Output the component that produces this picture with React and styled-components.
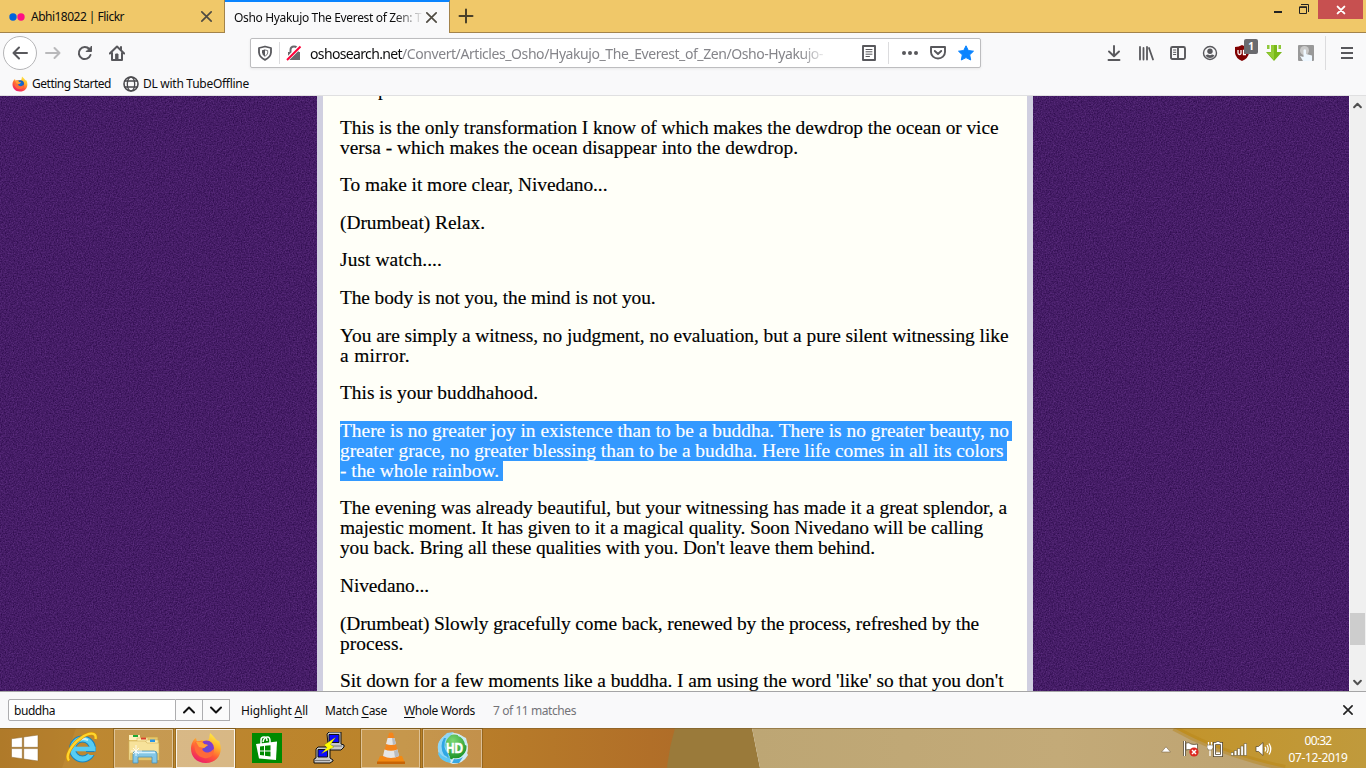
import React, { useLayoutEffect, useRef, useState } from "react";
import styled, { createGlobalStyle, css } from "styled-components";

const UI = `"Noto Sans", "Open Sans", sans-serif`;

const noise = `url("data:image/svg+xml,${encodeURIComponent(
  `<svg xmlns='http://www.w3.org/2000/svg' width='256' height='256'><filter id='n' x='0' y='0' width='100%' height='100%' color-interpolation-filters='sRGB'><feTurbulence type='fractalNoise' baseFrequency='0.75' numOctaves='2' stitchTiles='stitch'/><feColorMatrix values='0.26 0 0 0 0.142  0.19 0 0 0 0.018  0.28 0 0 0 0.262  0 0 0 0 1'/></filter><rect width='256' height='256' filter='url(#n)'/></svg>`
)}")`;

const GlobalStyle = createGlobalStyle`
  * { box-sizing: border-box; }
  body { margin: 0; overflow: hidden; background: #f9f9fa; }
  svg { display: block; flex: none; }
`;

/* Text whose tracking is adjusted so that the run takes the given width. */
const Run = styled.span`
  display: inline-block;
  white-space: pre;
`;
function Fit({ w, children }) {
  const ref = useRef(null);
  const [spacing, setSpacing] = useState(0);
  useLayoutEffect(() => {
    const el = ref.current;
    const n = el.textContent.length;
    setSpacing((w - el.getBoundingClientRect().width) / n);
  }, [w]);
  return (
    <Run ref={ref} style={{ letterSpacing: `${spacing}px` }}>
      {children}
    </Run>
  );
}

const Screen = styled.div`
  width: 1366px;
  height: 768px;
  display: flex;
  flex-direction: column;
  overflow: hidden;
  font: 12px ${UI};
  color: #0c0c0d;
`;

/* ---------- tab strip ---------- */
const TabStrip = styled.div`
  height: 33px;
  flex: none;
  display: flex;
  background: #f0c869;
`;
const Tab = styled.div`
  width: 225px;
  height: 33px;
  display: flex;
  align-items: center;
  padding: 1px 10px 0 9px;
  border-right: 1px solid #a3834a;
  border-bottom: 1px solid #a3834a;
  ${(p) =>
    p.$active &&
    css`
      background: #f9f9fa;
      border-top: 2px solid #0a84ff;
      border-bottom: 0;
      padding-top: 0;
    `}
`;
const TabTitle = styled.div`
  flex: 1;
  overflow: hidden;
  white-space: nowrap;
  line-height: 18px;
  padding-left: ${(p) => p.$pad || 0}px;
  ${(p) =>
    p.$fade &&
    css`
      padding-top: 1px;
      mask-image: linear-gradient(90deg, #000 160px, transparent 190px);
    `}
`;
const StripRest = styled.div`
  flex: 1;
  display: flex;
  align-items: flex-start;
  border-bottom: 1px solid #a3834a;
  padding-left: 8px;
`;
const PlusBox = styled.div`
  padding-top: 8px;
  flex: 1;
`;
const WinGlyphs = styled.div`
  display: flex;
  gap: 17px;
  padding: 4px 9px 0 0;
`;
const CloseWin = styled.div`
  width: 45px;
  height: 19px;
  margin-right: 3px;
  background: #c75050;
  display: flex;
  align-items: center;
  justify-content: center;
`;

/* ---------- toolbars ---------- */
const NavBar = styled.div`
  height: 40px;
  flex: none;
  display: flex;
  align-items: center;
  background: #f9f9fa;
  padding: 0 13px 0 3px;
`;
const BackButton = styled.div`
  width: 34px;
  height: 34px;
  border: 1px solid #b5b5b7;
  border-radius: 50%;
  background: #fff;
  display: flex;
  align-items: center;
  justify-content: center;
`;
const NavIcons = styled.div`
  display: flex;
  gap: 16px;
  padding-left: 8px;
  width: 213px;
`;
const UrlBar = styled.div`
  width: 731px;
  height: 30px;
  background: #fff;
  border: 1px solid #bdbdbf;
  border-radius: 2px;
  box-shadow: 0 1px 3px rgba(0, 0, 0, 0.07);
  display: flex;
  align-items: center;
  padding: 0 6px 0 6px;
`;
const Divider = styled.div`
  width: 1px;
  height: ${(p) => p.$h || 22}px;
  background: #dcdcde;
  margin: 0 ${(p) => p.$r ?? 6}px 0 ${(p) => p.$l ?? 6}px;
`;
const UrlText = styled.div`
  width: 520px;
  margin: 0 31px 0 8px;
  font-size: 14px;
  line-height: 20px;
  padding-top: 1px;
  white-space: nowrap;
  overflow: hidden;
  color: #85858a;
  mask-image: linear-gradient(90deg, #000 490px, transparent 518px);
`;
const Host = styled.span`
  color: #0c0c0d;
`;
const UrlActions = styled.div`
  display: flex;
  gap: 12px;
`;
const Extensions = styled.div`
  flex: 1;
  display: flex;
  align-items: center;
  justify-content: flex-end;
  gap: 16px;
`;
const BadgeHost = styled.div`
  position: relative;
`;
const Badge = styled.div`
  position: absolute;
  left: 10px;
  top: -6px;
  width: 14px;
  height: 15px;
  border-radius: 2px;
  background: #6a6a6e;
  color: #fff;
  font: bold 10px/15px ${UI};
  text-align: center;
`;
const Bookmarks = styled.div`
  height: 23px;
  flex: none;
  display: flex;
  padding: 2px 12px 0;
  background: #f9f9fa;
  border-bottom: 1px solid #e0e0e1;
`;
const Bookmark = styled.div`
  display: flex;
  align-items: center;
  gap: 4px;
  height: 17px;
  margin-right: 12px;
  line-height: 17px;
`;

/* ---------- page ---------- */
const Viewport = styled.div`
  height: 595px;
  flex: none;
  display: flex;
  overflow: hidden;
  background: #421961 ${noise};
`;
const Article = styled.main`
  width: 716px;
  margin-left: 317px;
  border: solid #d0cfe0;
  border-width: 0 6px;
  padding: 0 17px;
  background: #fffff8;
  color: #000;
  font: 19.4px/20px "Liberation Serif", serif;
  -webkit-text-stroke: 0.15px currentColor;
`;
const Cut = styled.p`
  margin: -15.94px 0 17.6px;
  padding-left: 38px;
`;
const Para = styled.p`
  margin: 0 0 17.6px;
`;
const Line = styled.span`
  display: block;
  height: 20px;
  white-space: pre;
`;
const Marked = styled(Line)`
  width: ${(p) => p.$w}px;
  background: #3399ff;
  color: #fff;
`;
const ScrollBar = styled.div`
  width: 17px;
  margin-left: auto;
  background: #f0f0f0;
  border-left: 1px solid #fbfbfb;
  display: flex;
  flex-direction: column;
  align-items: flex-start;
  padding: 5px 0 4px;
  svg { margin-left: 3px; }
`;
const Thumb = styled.div`
  width: 15px;
  height: 32px;
  background: #cdcdcd;
  margin: 503px 0 auto;
`;

/* ---------- find bar ---------- */
const FindBar = styled.div`
  height: 37px;
  flex: none;
  display: flex;
  align-items: center;
  border-top: 1px solid #a5a5a6;
  background: #f9f9fa;
  padding: 0 12px 0 8px;
`;
const FindField = styled.div`
  width: 168px;
  height: 22px;
  border: 1px solid #adadaf;
  border-radius: 2px 0 0 2px;
  background: #fff;
  padding: 1px 5px 0;
  line-height: 20px;
`;
const FindStep = styled.div`
  width: 27px;
  height: 22px;
  border: 1px solid #adadaf;
  border-left: 0;
  background: #fbfbfb;
  display: flex;
  align-items: center;
  justify-content: center;
`;
const FindLabel = styled.div`
  margin-left: ${(p) => p.$l}px;
  color: ${(p) => (p.$dim ? "#737378" : "#0c0c0d")};
  line-height: 18px;
  padding-top: 1px;
  u { text-underline-offset: 2px; }
`;
const Spacer = styled.div`
  flex: 1;
`;

/* ---------- task bar ---------- */
const TaskBar = styled.div`
  height: 40px;
  flex: none;
  position: relative;
  display: flex;
  align-items: center;
`;
const Backdrop = styled.svg`
  position: absolute;
  inset: 0;
`;
const TaskItem = styled.div`
  position: relative;
  width: ${(p) => p.$w ?? 59}px;
  height: 39px;
  margin-right: ${(p) => p.$r ?? 3}px;
  display: flex;
  align-items: center;
  justify-content: center;
  ${(p) =>
    p.$open &&
    css`
      background: rgba(255, 255, 255, ${p.$active ? 0.42 : 0.16});
      border: 1px solid rgba(255, 255, 255, ${p.$active ? 0.85 : 0.42});
      box-shadow: 0 0 0 1px rgba(90, 60, 10, 0.35);
    `}
`;
const Tray = styled.div`
  position: relative;
  margin-left: auto;
  display: flex;
  align-items: center;
  gap: 8px;
  padding-top: 2px;
`;
const TrayArrow = styled.svg`
  margin-right: 4px;
`;
const Clock = styled.div`
  width: 76px;
  margin-right: 10px;
  color: #fff;
  text-align: center;
  line-height: 17px;
`;

/* ---------- drawings ---------- */
const G = "#58585c";
const Cross = ({ s = 16, c = "#4f4b42", w = 1.8, r = 4.5 }) => (
  <svg width={s} height={s} viewBox="-8 -8 16 16">
    <path d={`M${-r} ${-r}L${r} ${r}M${r} ${-r}L${-r} ${r}`} stroke={c} strokeWidth={w} fill="none" strokeLinecap="round" />
  </svg>
);
const Stroke = ({ d, c = G, w = 2, s = 16, children }) => (
  <svg width={s} height={s} viewBox="0 0 16 16" fill="none" stroke={c} strokeWidth={w} strokeLinecap="round" strokeLinejoin="round">
    {d && <path d={d} />}
    {children}
  </svg>
);
const FoxIcon = ({ size, id }) => (
  <svg width={size} height={size} viewBox="0 0 32 32">
    <defs>
      <linearGradient id={`${id}a`} x1=".8" y1="0" x2=".3" y2="1">
        <stop offset="0" stopColor="#fff04a" />
        <stop offset=".35" stopColor="#ffb52b" />
        <stop offset=".65" stopColor="#ff5a36" />
        <stop offset="1" stopColor="#ec1c6c" />
      </linearGradient>
      <radialGradient id={`${id}b`}>
        <stop offset="0" stopColor={size > 20 ? "#5b4fd8" : "#0a7be0"} />
        <stop offset="1" stopColor={size > 20 ? "#8a3ac8" : "#1b57b8"} />
      </radialGradient>
    </defs>
    <path d="M20 1C25 5 26 9 29 9C34 20 28 31 16 31C6 31 1 24 1 17C1 12 3 8 6 6L7 10L12 8C15 9 17 9 19 7Z" fill={`url(#${id}a)`} />
    <circle cx="16.5" cy="16" r="7.5" fill={`url(#${id}b)`} />
    <path d="M5 10C9 8 13 9 14 12L18 13L14 16C11 16 12 20 17 20.500C21 20.500 22 18 24 17C24 24 19 27 14 26C7 25 3 18 5 10Z" fill="#ff6a39" />
    <path d="M6 10C9 9 13 10 14 12L18 13L14 16L9 15Z" fill="#ffa436" />
  </svg>
);
const WindowsLogo = () => (
  <svg width="28" height="26" viewBox="0 0 28 26" fill="#fff" stroke="#8a642a" strokeWidth=".5">
    <path d="M.5 3.8L11.3 2.3V12.3H.5ZM12.7 2L27 0V12.3H12.7ZM.5 13.6H11.3V23.7L.5 22.2ZM12.7 13.6H27V26L12.7 24Z" />
  </svg>
);
const IeLogo = () => (
  <svg width="32" height="32" viewBox="0 0 32 32" fill="none">
    <circle cx="16.5" cy="17" r="10" stroke="#1a83bd" strokeWidth="7" />
    <circle cx="16.5" cy="17" r="10" stroke="#55cdf5" strokeWidth="5" />
    <path d="M18 19.5H31V23H24Z" fill="#bd852f" />
    <path d="M9 17H29.5" stroke="#58cdf3" strokeWidth="4.6" />
    <path d="M28.5 19.6H20" stroke="#1a83bd" strokeWidth="1" />
    <path d="M10 10Q15 5 22 8" stroke="#c4f2ff" strokeWidth="2" />
    <path d="M3 29C-1 24 5 13 15 6C23 0 31 0 29.5 7" stroke="#d99400" strokeWidth="3.4" />
    <path d="M3 28.5C-1 24 5 13 15 6C23 0 31 0 29.5 7" stroke="#ffd52e" strokeWidth="2.3" />
  </svg>
);
const Folder = () => (
  <svg width="32" height="32" viewBox="0 0 32 32">
    <path d="M1 3H9L11 5H30V8H31V27H1Z" fill="#e6c86b" stroke="#c7a24a" strokeWidth=".7" />
    <path d="M1 3H12V8H1Z" fill="#fff2bd" />
    <path d="M9 6H20V10H9Z" fill="#fdeeb0" stroke="#cfae5b" strokeWidth=".5" />
    <path d="M18 8H30V12H18Z" fill="#fdeeb0" stroke="#cfae5b" strokeWidth=".5" />
    <path d="M1 9H17L19 11H31V28H1Z" fill="#f7e29a" stroke="#d3b25c" strokeWidth=".6" />
    <path d="M5 3H10V5H5Z" fill="#1caa35" />
    <path d="M13 5.5H18V7.5H13Z" fill="#d8402c" />
    <path d="M22 7.500H27V10H22Z" fill="#2b96e6" />
    <path d="M2 21H31V28H2Z" fill="#e3c46c" />
    <path d="M5 31V22Q5 19 8 19H26Q29 19 29 22V31H24V25H10V31Z" fill="#84c7e6" stroke="#4a93b8" strokeWidth=".8" />
    <path d="M7 20.5H27" stroke="#d7f3ff" strokeWidth="1.6" />
    <path d="M8 13V24M3 19H14M5 16L11 22M11 16L5 22" stroke="#fff" strokeWidth=".8" />
  </svg>
);
const Store = () => (
  <svg width="30" height="30" viewBox="0 0 30 30">
    <path d="M0 0H30V30H0Z" fill="#008a00" />
    <path d="M9 11V7Q9 4 12 4Q15 4 15 8M11 9Q12 4 15.5 4Q18 4 18 8V10" fill="none" stroke="#fff" strokeWidth="1.5" />
    <path d="M4 11L25 8.5L24 27L7 25.5Z" fill="#fff" />
    <path d="M8 13.500L12 13V17.5H8ZM13 12.800L18.500 12.200V17.5H13ZM8 18.500H12V22.500L8 22ZM13 18.500H18.500V23.500L13 22.700Z" fill="#008a00" />
  </svg>
);
const Putty = () => (
  <svg width="32" height="32" viewBox="0 0 32 32" stroke="#111" strokeWidth="1" strokeLinejoin="round">
    <path d="M14 2L16 0H28V12L31 13V15L28 18H13V14L15 12Z" fill="#c9c9c9" />
    <path d="M16 2.500H26V10.500H16Z" fill="#0a0aff" />
    <path d="M14 14H29" stroke="#777" />
    <path d="M3 17L5 15H17V26L20 28V29L17 31H1V27L3 26Z" fill="#c9c9c9" />
    <path d="M5 17.500H14.500V25H5Z" fill="#0a0aff" />
    <path d="M2 28.500H17" stroke="#777" />
    <path d="M23 5L11 13L14 15.500L8 22L21 15L17.500 12.500Z" fill="#ffff00" strokeWidth=".2" />
  </svg>
);
const Cone = () => (
  <svg width="28" height="32" viewBox="0 0 28 32">
    <path d="M3 24H25L28 31H0Z" fill="#f28a12" />
    <path d="M0 29.500H28V32H0Z" fill="#c86404" />
    <path d="M12 1Q14 0 16 1L22.500 26Q14 31 5.500 26Z" fill="#f4851c" />
    <path d="M10.600 6H17.400L19 12Q14 14 9 12ZM7.500 17.500Q14 20 20.500 17.500L22 24Q14 28 6 24Z" fill="#e6e6e6" />
    <path d="M15 6H17.400L19 12L16 13ZM17 19L20.500 17.500L22 24L18 25.500Z" fill="#b9bcc0" />
  </svg>
);
const HdIcon = () => (
  <svg width="32" height="32" viewBox="0 0 32 32">
    <defs>
      <radialGradient id="hd" cx=".45" cy=".25" r=".8">
        <stop offset="0" stopColor="#7bd872" />
        <stop offset="1" stopColor="#148d22" />
      </radialGradient>
    </defs>
    <circle cx="16" cy="16" r="15" fill="#dcebf0" />
    <circle cx="17" cy="15" r="12.500" fill="url(#hd)" />
    <text x="9" y="21" fontFamily="Liberation Sans, sans-serif" fontWeight="bold" fontSize="14" fill="#fff" stroke="#fff" strokeWidth=".5" textLength="17" lengthAdjust="spacingAndGlyphs">HD</text>
    <path d="M10 1L17 0L13 4Q6 10 10 19L13 25L4 25Q-3 13 5 6Z" fill="#8fd6f6" />
    <path d="M7 6Q2 14 7 23L12 26L11 22Q5 15 9 6Z" fill="#2fa6e4" />
    <path d="M2 20Q6 27 13 25L14 31Q4 30 1 22Z" fill="#5fc6f2" />
    <path d="M13 31L16 26Q24 28 29 19L31 23Q26 32 16 32Z" fill="#cfeaf5" />
    <path d="M15 31L17 27Q22 28 26 25L22 31Z" fill="#3aa8e2" />
    <path d="M21 2L29 6L31 14L28 13Q27 6 21 4Z" fill="#c9ebf5" />
  </svg>
);
const Globe = () => (
  <svg width="16" height="16" viewBox="0 0 16 16" fill="none" stroke="#4a4a4e" strokeWidth="1.300">
    <circle cx="8" cy="8" r="7" strokeWidth="1.600" />
    <ellipse cx="8" cy="8" rx="3.700" ry="7" />
    <path d="M1.500 5H14.500M1.500 11H14.500" />
  </svg>
);

/* [text, width of the run, width of its selection] */
const paragraphs = [
  [["This is the only transformation I know of which makes the dewdrop the ocean or vice", 658.5], ["versa - which makes the ocean disappear into the dewdrop.", 458]],
  [["To make it more clear, Nivedano...", 267.5]],
  [["(Drumbeat) Relax.", 145]],
  [["Just watch....", 102]],
  [["The body is not you, the mind is not you.", 315.5]],
  [["You are simply a witness, no judgment, no evaluation, but a pure silent witnessing like", 668.5], ["a mirror.", 70]],
  [["This is your buddhahood.", 198]],
  [["There is no greater joy in existence than to be a buddha. There is no greater beauty, no", 669, 672], ["greater grace, no greater blessing than to be a buddha. Here life comes in all its colors", 663.5, 667], ["- the whole rainbow.", 159, 163]],
  [["The evening was already beautiful, but your witnessing has made it a great splendor, a", 667], ["majestic moment. It has given to it a magical quality. Soon Nivedano will be calling", 643], ["you back. Bring all these qualities with you. Don't leave them behind.", 535]],
  [["Nivedano...", 89]],
  [["(Drumbeat) Slowly gracefully come back, renewed by the process, refreshed by the", 639], ["process.", 63.5]],
  [["Sit down for a few moments like a buddha. I am using the word 'like' so that you don't", 663.5]],
];

export default function App() {
  return (
    <Screen>
      <GlobalStyle />
      <TabStrip>
        <Tab>
          <svg width="16" height="16" viewBox="0 0 16 16">
            <circle cx="4" cy="8" r="3.700" fill="#0063dc" />
            <circle cx="12" cy="8" r="3.700" fill="#ff0f84" />
          </svg>
          <TabTitle $pad={6}><Fit w={93}>Abhi18022 | Flickr</Fit></TabTitle>
          <Cross s={15} r={5} />
        </Tab>
        <Tab $active>
          <TabTitle $fade><Fit w={181}>Osho Hyakujo The Everest of Zen: </Fit>T</TabTitle>
          <Cross s={15} r={5} />
        </Tab>
        <StripRest>
          <PlusBox><Stroke d="M8 1.500V14.500M1.500 8H14.500" c="#4a4029" s={16} /></PlusBox>
          <WinGlyphs>
            <svg width="8" height="11"><path d="M0 7H8V9H0Z" fill="#222" /></svg>
            <svg width="10" height="10" fill="none" stroke="#222"><path d="M2 .5H9.500V8" /><path d="M.5 3H7.500V9.500H.5Z" /><path d="M.5 3.200H8" strokeWidth="1.500" /></svg>
          </WinGlyphs>
          <CloseWin><Cross s={12} c="#fff" w={2.6} r={4.5} /></CloseWin>
        </StripRest>
      </TabStrip>

      <NavBar>
        <BackButton><Stroke d="M15 8H1.500M7 2.500L1.500 8L7 13.500" /></BackButton>
        <NavIcons>
          <Stroke d="M1 8H14.500M9.500 3L14.500 8L9.500 13" c="#b9b9bb" />
          <Stroke>
            <path d="M13.500 10A6 6 0 1 1 12.300 4" />
            <path d="M14.500 1.500V6.500H9.500Z" fill={G} strokeWidth="1" />
          </Stroke>
          <Stroke>
            <path d="M.8 8.500L8 1.500L15.200 8.500M3 8V15H13V8" />
            <path d="M7 9H9V15H7Z" fill={G} strokeWidth="1" />
            <path d="M12 2V4.500" />
          </Stroke>
        </NavIcons>
        <UrlBar>
          <Stroke w={1.8}>
            <path d="M8 1.500L14 3V7.500Q13.500 12.500 8 14.800Q2.500 12.500 2 7.500V3Z" />
            <path d="M8 4.500V11.500Q5 10 5 7.500V5.200Z" fill={G} stroke="none" />
            <path d="M8 5L10.700 5.600V8Q10.500 10 8 11.300" strokeWidth=".8" />
          </Stroke>
          <Divider />
          <svg width="16" height="16" viewBox="0 0 16 16">
            <path d="M4.500 8V5Q4.500 1.500 8 1.500Q11.500 1.500 11.500 5V8" fill="none" stroke="#68686c" strokeWidth="2" />
            <path d="M2 7H14V15H2Z" fill="#68686c" />
            <path d="M.5 15L14.500 1" stroke="#fff" strokeWidth="4" />
            <path d="M1 15L14.500 1.500" stroke="#ff0039" strokeWidth="1.900" />
          </svg>
          <UrlText>
            <Host><Fit w={92}>oshosearch.net</Fit></Host>
            <Fit w={421}>/Convert/Articles_Osho/Hyakujo_The_Everest_of_Zen/Osho-Hyakujo-</Fit>
          </UrlText>
          <Stroke w={1.9}>
            <path d="M2 1H14V15H2Z" />
            <path d="M5 4.500H11M5 6.800H11M5 9.200H11M5 11.500H8.500" strokeWidth="1" />
          </Stroke>
          <Divider $h={22} $l={11} $r={13} />
          <UrlActions>
            <svg width="16" height="16" viewBox="0 0 16 16" fill={G}><circle cx="2" cy="8" r="2" /><circle cx="8" cy="8" r="2" /><circle cx="14" cy="8" r="2" /></svg>
            <Stroke w={1.900}><path d="M1 2H15V7A7 6.500 0 0 1 1 7Z" /><path d="M4.800 6L8 9L11.200 6" /></Stroke>
            <svg width="16" height="16" viewBox="0 0 16 16"><path d="M8 .8L10.300 5.500L15.500 6.200L11.700 9.800L12.700 15L8 12.600L3.300 15L4.300 9.800L.5 6.200L5.700 5.500Z" fill="#0a84ff" stroke="#0a84ff" strokeLinejoin="round" /></svg>
          </UrlActions>
        </UrlBar>
        <Extensions>
          <Stroke d="M8 1V11M3 6.500L8 11.200L13 6.500M2.500 15H13.500" w={1.900} />
          <Stroke d="M2 2V14.500M5.500 3V14.500M9 2V14.500M11 3L15 14.500" w={1.8} />
          <Stroke w={1.900}><path d="M2.500 2H13.500Q15 2 15 3.500V12.500Q15 14 13.500 14H2.500Q1 14 1 12.500V3.500Q1 2 2.500 2ZM8 2V14" /><path d="M3.500 5H5.800M3.500 7.300H5.800M3.500 9.500H5.800" strokeWidth="1" /></Stroke>
          <Stroke w={1.4}>
            <circle cx="8" cy="8" r="6.500" />
            <circle cx="8" cy="6.300" r="2.700" fill={G} stroke="none" />
            <path d="M3.500 10.500Q5 9.500 6 9.500Q8 11 10 9.500Q11 9.500 12.500 10.500Q11 13 8 13Q5 13 3.500 10.500Z" fill={G} stroke="none" />
          </Stroke>
          <BadgeHost>
            <svg width="16" height="16" viewBox="0 0 16 16">
              <path d="M8 0Q11 2 15 2V8Q14.500 13 8 16Q1.500 13 1 8V2Q5 2 8 0Z" fill="#800000" />
              <path d="M4 5V8Q4 9.500 5.500 9.500Q7 9.500 7 8V5M12 5.500H9.500V9.500H12" stroke="#fff" strokeWidth="1.300" fill="none" />
            </svg>
            <Badge>1</Badge>
          </BadgeHost>
          <svg width="16" height="16" viewBox="0 0 16 16"><path d="M5 0H11V7H16L8 16L0 7H5Z" fill="#78b818" /><path d="M1 0H3.500V4H1ZM12.500 0H15V4H12.500Z" fill="#8fc83a" /><path d="M5 0H8V15L1 7.500H5Z" fill="#93cc35" /></svg>
          <svg width="16" height="16" viewBox="0 0 16 16"><rect width="16" height="16" rx="1" fill="#999" /><circle cx="6.500" cy="5.500" r="4.500" fill="#c9c9c9" /><path d="M5.500 5Q7 3.500 8 5V9L14 10.500V16H5L2 11L5.500 12Z" fill="#eef7ff" /></svg>
          <Divider $h={34} $l={-5} $r={-1} />
          <svg width="12" height="14" viewBox="0 0 12 14"><path d="M0 2H12M0 7H12M0 12H12" stroke={G} strokeWidth="2" /></svg>
        </Extensions>
      </NavBar>

      <Bookmarks>
        <Bookmark><FoxIcon size={16} id="s" /><Fit w={79}>Getting Started</Fit></Bookmark>
        <Bookmark><Globe /><Fit w={106}>DL with TubeOffline</Fit></Bookmark>
      </Bookmarks>

      <Viewport>
        <Article>
          <Cut>p</Cut>
          {paragraphs.map((lines, i) => (
            <Para key={i}>
              {lines.map(([text, w, mark]) =>
                mark ? (
                  <Marked key={text} $w={mark}><Fit w={w}>{text}</Fit></Marked>
                ) : (
                  <Line key={text}><Fit w={w}>{text}</Fit></Line>
                )
              )}
            </Para>
          ))}
        </Article>
        <ScrollBar>
          <Stroke s={9} d="M2 11L8 5L14 11" c="#505050" w={3.5} />
          <Thumb />
          <Stroke s={9} d="M2 5L8 11L14 5" c="#505050" w={3.5} />
        </ScrollBar>
      </Viewport>

      <FindBar>
        <FindField><Fit w={41}>buddha</Fit></FindField>
        <FindStep><Stroke d="M3 10.500L8 5.500L13 10.500" c="#111" /></FindStep>
        <FindStep><Stroke d="M3 5.500L8 10.500L13 5.500" c="#111" /></FindStep>
        <FindLabel $l={11}><Fit w={67}>Highlight <u>A</u>ll</Fit></FindLabel>
        <FindLabel $l={17}><Fit w={62}>Match <u>C</u>ase</Fit></FindLabel>
        <FindLabel $l={17}><Fit w={71}><u>W</u>hole Words</Fit></FindLabel>
        <FindLabel $l={18} $dim><Fit w={83}>7 of 11 matches</Fit></FindLabel>
        <Spacer />
        <Cross s={12} c="#222" w={2.2} r={5.5} />
      </FindBar>

      <TaskBar>
        <Backdrop width="1366" height="40" viewBox="0 0 1366 40">
          <defs>
            <linearGradient id="w1"><stop offset="0" stopColor="#b37e2c" /><stop offset=".1" stopColor="#bd8832" /><stop offset=".6" stopColor="#bb832a" /><stop offset="1" stopColor="#b06d28" /></linearGradient>
            <linearGradient id="w2"><stop offset="0" stopColor="#bda674" /><stop offset=".5" stopColor="#c3aa78" /><stop offset="1" stopColor="#bba06e" /></linearGradient>
            <linearGradient id="w3"><stop offset="0" stopColor="#c3942b" /><stop offset="1" stopColor="#c09a3c" /></linearGradient>
          </defs>
          <path d="M0 0H675V40H0Z" fill="url(#w1)" />
          <path d="M0 0H76L62 40H0Z" fill="#a97425" opacity=".35" />
          <path d="M675 0H752L760 40H667Q669 20 675 0Z" fill="#9a7a3a" />
          <path d="M752 0H1366V40H760Z" fill="url(#w2)" />
          <path d="M1174 0H1366V40H1285Q1220 26 1174 0Z" fill="url(#w3)" />
          <path d="M1174 0Q1220 26 1285 40" stroke="#b98416" strokeWidth="6" opacity=".45" fill="none" />
          <path d="M0 .5H1366" stroke="#7a5c28" opacity=".55" />
        </Backdrop>
        <TaskItem $w={50} $r={3}><WindowsLogo /></TaskItem>
        <TaskItem $w={58} $r={3}><IeLogo /></TaskItem>
        <TaskItem $open><Folder /></TaskItem>
        <TaskItem $open $active><FoxIcon size={32} id="l" /></TaskItem>
        <TaskItem $w={58}><Store /></TaskItem>
        <TaskItem><Putty /></TaskItem>
        <TaskItem $open><Cone /></TaskItem>
        <TaskItem $open><HdIcon /></TaskItem>
        <Tray>
          <TrayArrow width="10" height="7"><path d="M.5 6L5 .8L9.500 6Z" fill="#fff" stroke="#786446" strokeWidth=".6" /></TrayArrow>
          <svg width="16" height="16" viewBox="0 0 16 16"><path d="M1.500 0V15" stroke="#4e4026" strokeWidth="3" /><path d="M1.500 0V15" stroke="#fff" strokeWidth="1.400" /><path d="M3 2Q6 1 8 3Q11 4 14.500 3V10Q11 11 8 9Q6 8 3 9Z" fill="#fff" stroke="#4e4026" strokeWidth=".7" /><circle cx="11" cy="11" r="4.600" fill="#dc2a20" /><path d="M9 9L13 13M13 9L9 13" stroke="#fff" strokeWidth="1.500" /></svg>
          <svg width="16" height="16" viewBox="0 0 16 16" fill="none" stroke="#fff"><path d="M7.500 2.500H14.500V14.500H7.500ZM9.500 1.500H12.500" strokeWidth="3" stroke="#4e4026" /><path d="M7.500 2.500H14.500V14.500H7.500ZM9.500 1.500H12.500" strokeWidth="1.400" /><path d="M9 11.500H13V13H9Z" fill="#fff" stroke="none" /><path d="M1.500 1V4M4.500 1V4M3 8V15" strokeWidth="1.300" /><path d="M0 4H6V7L4.500 9H1.500L0 7Z" fill="#fff" stroke="#4e4026" strokeWidth=".5" /></svg>
          <svg width="16" height="16" viewBox="0 0 16 16" fill="#fff" stroke="#4e4026" strokeWidth=".5"><path d="M0 11.500H2.500V14.500H0ZM3.200 9.500H5.800V14.500H3.200ZM6.500 7.500H9.100V14.500H6.500ZM9.800 5H12.400V14.500H9.800ZM13.100 2.500H15.700V14.500H13.100Z" /></svg>
          <svg width="17" height="16" viewBox="0 0 17 16" fill="none" stroke="#fff" strokeWidth="1.300"><path d="M1 5.500H3.500L8 1.500V14.500L3.500 10.500H1Z" fill="#fff" stroke="#4e4026" strokeWidth=".7" /><path d="M10 6Q11.500 8 10 10.500M12 4Q14.500 8 12 12M14 2.500Q17.500 8 14 13.500" /></svg>
          <Clock><Fit w={27}>00:32</Fit><br /><Fit w={59}>07-12-2019</Fit></Clock>
        </Tray>
      </TaskBar>
    </Screen>
  );
}
